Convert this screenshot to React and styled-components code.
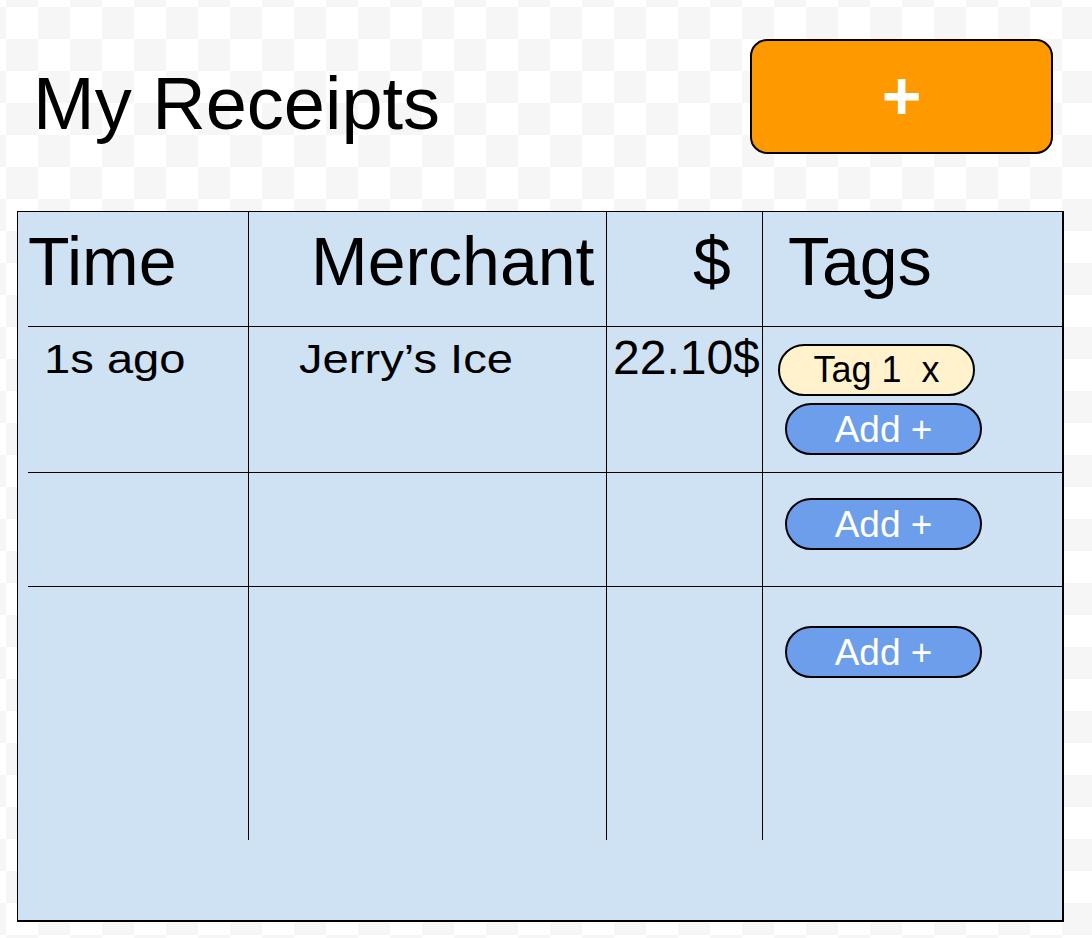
import React from "react";
import styled, { createGlobalStyle } from "styled-components";

const FONT = `"Liberation Sans", Arial, sans-serif`;

const GlobalStyle = createGlobalStyle`
  html, body {
    margin: 0;
    padding: 0;
  }
  body {
    background-color: #ffffff;
    background-image: conic-gradient(#f6f6f6 25%, transparent 0 50%, #f6f6f6 0 75%, transparent 0);
    background-size: 64px 64px;
    background-position: 6px 7px;
    font-family: ${FONT};
    color: #000;
  }
`;

const Page = styled.div`
  width: 1092px;
  height: 938px;
`;

const TopBar = styled.header`
  display: flex;
  align-items: flex-start;
  justify-content: space-between;
  height: 211px;
  box-sizing: border-box;
  padding: 39px 39px 0 33px;
`;

const Title = styled.h1`
  margin: 28px 0 0;
  font-size: 74px;
  font-weight: 400;
  line-height: 1;
`;

const NewReceiptButton = styled.button`
  width: 303px;
  height: 115px;
  box-sizing: border-box;
  padding: 0 0 4px;
  background: #ff9900;
  border: 2px solid #000;
  border-radius: 17px;
  color: #fff;
  font: bold 68px/1 ${FONT};
  display: flex;
  align-items: center;
  justify-content: center;
`;

const Table = styled.section`
  margin-left: 17px;
  width: 1047px;
  height: 711px;
  box-sizing: border-box;
  border-style: solid;
  border-color: #000;
  border-width: 1px 2px 2px 1px;
  background: #cfe2f3;
  padding-left: 10px;
`;

const Row = styled.div`
  display: grid;
  grid-template-columns: 220px 358px 156px 291px;
  height: ${(p) => p.$h}px;
  box-sizing: border-box;
  border-bottom: ${(p) => (p.$last ? "none" : "1px solid #000")};
`;

const Cell = styled.div`
  box-sizing: border-box;
  min-width: 0;
  border-left: ${(p) => (p.$first ? "none" : "1px solid #000")};
  padding: ${(p) => p.$pt || 0}px 0 0 ${(p) => p.$pl || 0}px;
`;

const TagCell = styled(Cell)`
  display: flex;
  flex-direction: column;
  align-items: flex-start;
  gap: 7px;
`;

const HeadText = styled.span`
  display: block;
  font-size: 68px;
  line-height: 1;
  white-space: nowrap;
`;

const CellText = styled.span`
  display: inline-block;
  font-size: ${(p) => p.$size}px;
  line-height: 1;
  white-space: nowrap;
  transform: scaleX(${(p) => p.$stretch || 1});
  transform-origin: left center;
`;

const Pill = styled.span`
  display: flex;
  align-items: center;
  justify-content: center;
  width: 197px;
  height: 52px;
  box-sizing: border-box;
  border: 2px solid #000;
  border-radius: 26px;
  line-height: 1;
  white-space: pre;
`;

const TagChip = styled(Pill)`
  margin-left: 15px;
  background: #fff2cc;
  color: #000;
  font-size: 36px;
`;

const AddTagButton = styled(Pill).attrs({ as: "button" })`
  margin-left: 22px;
  padding: 0;
  background: #6d9eeb;
  color: #fff;
  font: 37px/1 ${FONT};
`;

const rows = [
  { h: 146, time: "1s ago", merchant: "Jerry\u2019s Ice", amount: "22.10$", tags: ["Tag 1"], pt: 17 },
  { h: 114, tags: [], pt: 25 },
  { h: 253, tags: [], pt: 39, last: true },
];

export default function App() {
  return (
    <Page>
      <GlobalStyle />
      <TopBar>
        <Title>My Receipts</Title>
        <NewReceiptButton>+</NewReceiptButton>
      </TopBar>
      <Table>
        <Row $h={115}>
          <Cell $first $pt={15}>
            <HeadText>Time</HeadText>
          </Cell>
          <Cell $pt={15} $pl={62}>
            <HeadText>Merchant</HeadText>
          </Cell>
          <Cell $pt={15} $pl={86}>
            <HeadText>$</HeadText>
          </Cell>
          <Cell $pt={15} $pl={25}>
            <HeadText>Tags</HeadText>
          </Cell>
        </Row>
        {rows.map((r, i) => (
          <Row key={i} $h={r.h} $last={r.last}>
            <Cell $first $pt={12} $pl={16}>
              {r.time && <CellText $size={41} $stretch={1.15}>{r.time}</CellText>}
            </Cell>
            <Cell $pt={12} $pl={50}>
              {r.merchant && <CellText $size={41} $stretch={1.15}>{r.merchant}</CellText>}
            </Cell>
            <Cell $pt={7} $pl={6}>
              {r.amount && <CellText $size={48}>{r.amount}</CellText>}
            </Cell>
            <TagCell $pt={r.pt}>
              {r.tags.map((t) => (
                <TagChip key={t}>{`${t}  x`}</TagChip>
              ))}
              <AddTagButton>Add +</AddTagButton>
            </TagCell>
          </Row>
        ))}
      </Table>
    </Page>
  );
}
